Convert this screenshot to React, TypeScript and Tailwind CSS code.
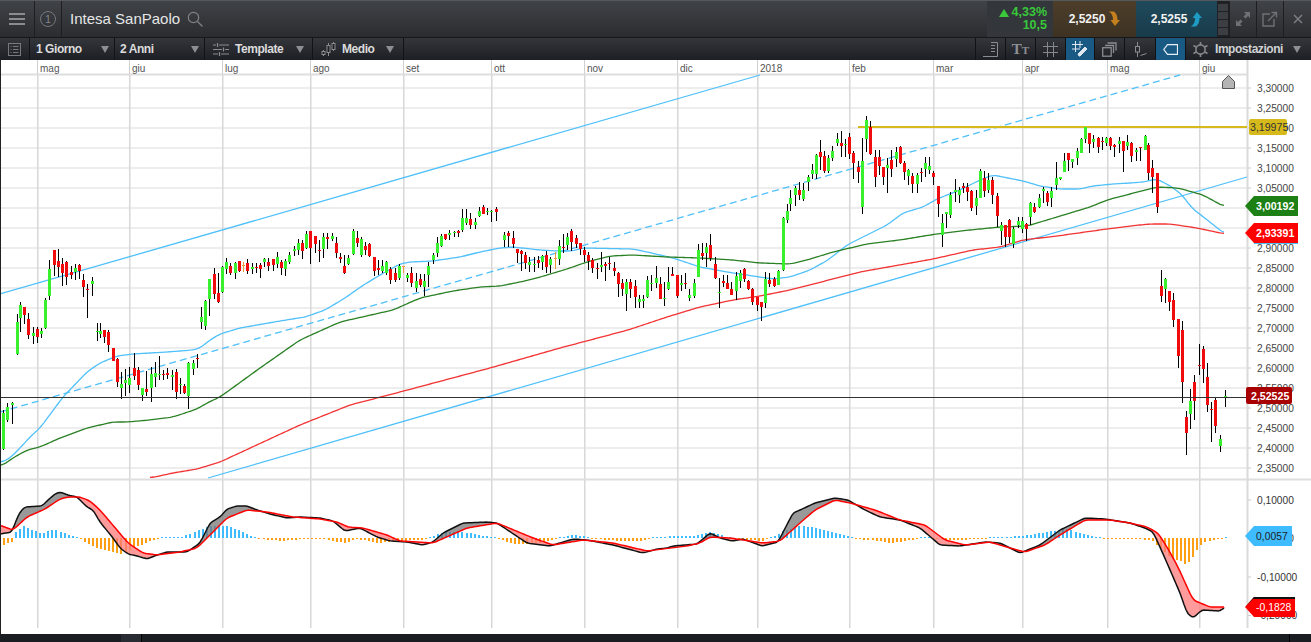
import React from "react"

type Pt = [number, number]
type Row = [number, number, number, number, number, string]

// candle rows are read off 3x crops: [x, wickTop, wickBottom, bodyTop, bodyBottom, colour]
const block = (ox: number, oy: number, rows: Row[]) =>
  rows.map(([x, a, b, c, d, k]) => ({
    x: ox + x / 3,
    top: oy + a / 3,
    bottom: oy + b / 3,
    bodyTop: oy + c / 3,
    bodyBottom: oy + d / 3,
    k,
  }))

const g = "g"
const r = "r"
const o = "o"

const candles = [
  ...block(0, 240, [
    [10,510,630,520,628,g],[22,490,545,502,540,g],[37,485,552,488,494,g],[50,222,345,245,340,g],[61,187,275,195,233,g],
    [73,200,252,202,227,r],[85,220,297,238,285,r],[100,260,312,279,288,g],[112,262,308,268,293,r],[124,265,293,273,281,g],
    [136,175,268,180,263,g],[148,60,180,88,168,g],[163,30,108,30,75,r],[175,28,110,63,80,r],[187,55,137,72,98,r],
    [199,62,135,67,113,r],[214,78,118,96,106,r],[226,72,120,83,95,g],[238,72,118,75,93,r],[250,102,170,120,140,r],
    [262,133,233,147,149,r],[277,110,167,123,131,g],[290,250,303,273,275,g],[301,250,293,273,282,g],[313,270,310,270,291,r],
    [325,270,335,275,315,r],[340,323,363,323,362,r],[352,355,440,357,426,r],[364,396,476,431,444,g],[376,388,468,420,428,g],
    [388,382,458,415,435,g],[403,340,420,384,407,r],[415,380,450,390,435,r],[427,443,482,444,465,g],[439,393,468,447,456,r],
    [454,380,486,402,443,g],[466,365,440,400,411,g],[478,348,420,401,403,g],[490,390,420,401,403,r],[502,385,418,399,404,r],
    [517,390,450,404,411,g],[529,388,476,396,456,r],[541,415,462,432,434,g],[553,432,462,438,458,r],[565,365,507,370,468,g],
    [580,360,405,368,387,g],[592,342,385,354,356,r],[604,200,268,232,246,g],[616,180,270,183,258,g],[628,118,228,118,177,g],
    [643,85,177,102,162,r],[655,100,190,160,188,r],
  ]),
  ...block(220, 200, [
    [7,197,278,200,275,g],[19,175,222,186,208,g],[31,190,225,198,220,r],[46,185,236,189,220,g],[58,183,215,183,213,r],
    [70,185,215,196,199,o],[82,177,222,189,214,r],[97,190,222,201,206,g],[109,190,220,202,205,r],[121,190,233,196,209,r],
    [133,175,200,177,186,g],[145,175,212,186,198,r],[160,177,212,178,195,r],[172,155,205,171,192,g],[184,180,225,186,204,r],
    [196,178,228,183,207,g],[208,155,193,165,186,g],[223,138,168,146,151,g],[235,118,165,129,150,g],[247,120,178,129,152,r],
    [259,92,148,102,145,g],[271,92,192,93,143,r],[286,108,160,108,132,r],[298,120,185,150,152,r],[310,100,175,110,147,g],
    [322,100,148,111,117,r],[337,100,122,107,117,g],[349,112,175,128,158,r],[361,160,190,171,177,r],[373,165,222,197,219,r],
    [385,165,195,174,192,g],[400,88,165,92,160,g],[412,92,142,114,128,r],[424,112,170,117,165,g],[436,125,165,137,150,r],
    [448,130,172,131,168,r],[463,170,228,170,213,r],[475,180,225,204,210,r],[487,180,220,197,212,g],[499,183,225,186,220,g],
    [511,200,252,207,240,r],[526,205,245,219,240,r],[538,192,240,198,233,g],[550,197,218,199,202,o],[562,218,245,225,234,g],
    [574,200,262,219,248,r],[589,220,275,243,263,g],[601,222,260,238,257,r],[613,222,288,242,261,g],[625,185,262,197,225,g],
    [640,160,192,165,180,g],[652,110,172,129,160,g],[664,102,140,108,137,g],[676,102,120,102,118,r],[688,90,120,98,105,g],
    [703,92,110,95,97,g],[715,90,110,94,99,r],[727,28,95,54,89,g],[739,28,75,53,69,g],[751,38,88,57,74,r],
    [766,55,88,66,75,g],[778,22,50,33,47,g],[790,15,43,20,42,r],[802,25,45,32,33,g],[814,30,65,33,35,g],[829,22,62,28,38,r],
  ]),
  ...block(500, 220, [
    [13,35,80,45,60,g],[25,33,80,40,50,r],[40,33,85,54,73,r],[52,87,130,87,99,r],[64,90,152,93,102,r],[76,95,148,105,130,r],
    [88,110,155,126,135,g],[103,110,155,132,134,g],[115,108,145,121,129,r],[127,105,150,109,127,g],[139,92,160,106,142,r],
    [151,112,160,117,135,g],[166,97,147,114,116,o],[178,60,135,78,118,g],[190,42,100,81,83,r],[202,40,90,52,77,g],
    [214,28,92,34,67,r],[229,45,85,54,72,r],[241,68,105,70,87,r],[253,80,125,90,105,r],[265,95,150,105,122,r],
    [277,115,158,119,142,r],[292,130,177,143,146,r],[304,95,155,135,141,g],[316,125,182,132,138,r],[328,112,150,129,132,r],
    [343,125,167,143,153,r],[355,155,232,158,192,r],[367,178,228,189,206,r],[379,178,272,187,222,g],[391,178,233,187,207,r],
    [406,180,263,198,232,r],[418,225,263,237,246,g],[430,225,263,237,243,g],[442,168,235,180,232,g],[454,165,212,189,193,g],
    [469,137,205,175,191,g],[481,170,238,192,238,r],[493,185,258,233,236,g],[505,140,210,186,208,g],[517,140,168,162,167,r],
    [532,165,235,165,228,r],[544,165,212,188,193,g],[556,160,207,188,191,r],[568,207,243,226,234,g],[583,178,233,189,228,g],
    [595,72,172,90,172,g],[607,70,120,99,108,r],[619,70,142,81,100,g],[631,42,123,75,115,r],[646,112,177,132,175,r],
    [658,175,265,216,219,g],[670,165,200,183,188,r],[682,165,208,188,207,r],[694,185,225,207,225,r],[709,155,240,167,213,g],
    [721,150,205,160,183,g],[733,145,185,147,177,r],[745,180,210,183,208,r],[757,205,255,207,245,r],[772,230,272,232,255,r],
    [784,245,302,247,262,r],[796,155,265,178,250,g],[808,158,200,179,192,r],[823,170,200,176,197,r],[835,150,195,152,193,g],
  ]),
  ...block(760, 100, [
    [68,350,513,353,510,g],[80,312,368,332,360,g],[91,270,333,294,312,g],[106,258,318,263,285,g],[118,247,300,270,285,r],
    [130,250,303,270,298,g],[143,225,273,232,248,g],[155,192,237,210,222,g],[169,163,237,165,222,g],[181,120,210,156,171,r],
    [193,152,218,167,213,r],[205,165,218,175,213,g],[217,138,182,153,173,g],[232,98,138,117,130,g],[244,94,170,129,137,r],
    [256,118,170,132,135,g],[268,98,178,111,161,r],[280,153,237,159,188,r],[295,183,248,200,215,r],[307,115,342,183,320,g],
    [319,48,155,60,117,g],[331,63,165,80,160,r],[346,150,260,170,230,r],[358,150,225,171,197,r],[370,200,255,202,233,r],
    [382,175,278,195,203,g],[394,150,230,180,208,r],[409,140,202,155,175,g],[421,138,192,141,190,r],[433,183,240,190,218,r],
    [445,208,255,209,228,g],[457,218,278,228,251,r],[472,220,278,226,254,g],[484,205,247,215,218,r],[496,170,232,190,209,g],
    [508,170,223,197,209,g],[520,212,254,220,233,r],[535,258,352,258,312,r],[547,342,442,370,405,g],[559,335,385,335,340,g],
    [571,275,355,284,344,g],[586,237,305,270,275,g],[598,262,310,270,285,g],[610,250,280,258,263,r],[622,250,302,260,275,r],
    [634,270,332,273,323,r],[649,270,345,293,318,g],[661,208,295,212,292,g],[673,213,290,235,275,r],[685,220,280,240,270,g],
    [697,230,312,240,285,r],[712,278,380,288,348,r],
  ]),
  ...block(990, 120, [
    [34,305,375,316,335,g],[46,315,380,316,352,r],[58,298,368,299,350,r],[70,320,385,328,372,g],[85,290,325,303,315,g],
    [97,290,340,303,327,g],[109,310,362,313,327,r],[121,245,315,248,290,g],[133,250,280,262,278,r],[148,222,265,235,262,g],
    [160,200,250,208,215,g],[172,212,258,220,248,r],[184,202,260,213,234,g],[199,125,210,174,195,g],[211,170,180,171,177,g],
    [223,98,155,123,155,g],[235,98,152,99,120,r],[247,118,145,118,128,g],[262,85,135,93,113,g],[274,55,100,57,98,g],
    [286,20,70,22,57,g],[298,40,98,40,74,r],[310,45,85,57,65,g],[325,52,100,54,82,r],[337,50,90,62,65,r],[349,50,78,54,68,g],
    [361,52,90,55,80,r],[373,72,110,75,80,r],[388,52,100,63,72,g],[400,62,155,63,92,r],[412,45,90,65,76,g],
  ]),
  ...block(1130, 80, [
    [3,185,245,188,227,r],[18,205,243,209,215,g],[31,200,243,201,204,r],[44,165,210,167,210,g],[55,190,300,195,278,r],
    [67,240,338,263,291,r],[82,280,400,280,383,r],
  ]),
  ...block(1130, 260, [
    [94,30,125,78,107,r],[106,55,128,57,87,g],[118,93,152,93,125,r],[130,98,200,120,180,r],[145,177,325,177,287,r],
    [157,183,430,210,365,r],[169,452,584,471,518,r],[181,387,508,423,462,g],[193,345,480,366,422,r],[208,252,345,315,317,r],
    [220,258,370,267,326,r],[232,310,455,351,434,r],[244,425,545,447,449,r],[256,412,520,420,497,r],[271,525,575,537,557,g],
    [284,390,440,408,411,g],
  ]),
]

const lerp = (pts: Pt[], x: number) => {
  for (let i = 1; i < pts.length; i++) {
    if (x <= pts[i][0]) {
      const [x0, y0] = pts[i - 1]
      const [x1, y1] = pts[i]
      return y0 + ((y1 - y0) * (x - x0)) / (x1 - x0)
    }
  }
  return pts[pts.length - 1][1]
}

// the anchors are sparse, so average over a window to round the corners off
const smooth = (pts: Pt[], w: number): Pt[] => {
  const from = pts[0][0]
  const to = pts[pts.length - 1][0]
  const out: Pt[] = []
  for (let x = from; x <= to; x += 2) {
    let sum = 0
    let n = 0
    for (let i = Math.max(from, x - w); i <= Math.min(to, x + w); i += 1) {
      sum += lerp(pts, i)
      n++
    }
    out.push([x, +(sum / n).toFixed(2)])
  }
  return out
}

const blueMa = smooth([[0,463],[10,458],[20,448],[30,437],[40,428],[63,397],[87,372],[100,363],[117,356],[133,354],[167,352],[193,350],[200,348],[210,340],[220,334],[240,328],[280,321],[305,317],[325,310],[345,298],[362,286],[380,275],[400,264],[410,262],[433,261],[460,257],[480,252],[500,248],[513,247],[540,250],[557,251],[572,251],[583,248],[633,249],[647,252],[673,258],[700,267],[727,272],[753,276],[773,279],[790,277],[810,270],[828,260],[847,245],[867,235],[887,225],[903,213],[923,207],[937,199],[960,190],[980,180],[993,175],[1003,177],[1023,181],[1040,186],[1060,189],[1080,189],[1093,186],[1113,184],[1130,183],[1143,182],[1157,179],[1172,187],[1182,195],[1192,208],[1225,234]], 4)
const greenMa = smooth([[0,467],[13,458],[27,450],[40,447],[60,438],[87,428],[113,422],[127,422],[150,420],[173,417],[197,409],[207,403],[220,397],[260,368],[300,340],[340,322],[393,310],[420,298],[453,291],[480,287],[500,286],[520,282],[537,278],[567,269],[587,262],[610,256],[633,255],[667,257],[700,258],[733,260],[760,263],[790,264],[807,260],[833,252],[867,244],[900,240],[930,235],[960,231],[1000,227],[1027,226],[1057,217],[1090,207],[1107,200],[1130,194],[1157,187],[1178,188],[1203,195],[1225,207]], 5)
const redMa = smooth([[150,478],[173,473],[197,469],[220,462],[300,425],[350,405],[400,392],[490,368],[560,348],[628,330],[667,317],[700,307],[733,300],[760,296],[790,290],[860,272],[933,259],[973,250],[1000,247],[1023,240],[1057,236],[1107,229],[1130,226],[1150,224],[1170,224],[1197,228],[1225,234]], 5)

const macd = smooth([[0,534],[12,532],[15,523],[20,512],[25,507],[42,506],[48,500],[55,494],[60,492],[68,495],[77,497],[87,507],[93,510],[100,522],[113,538],[120,548],[128,554],[137,556],[147,559],[157,555],[167,552],[187,552],[200,543],[210,523],[220,517],[227,509],[237,506],[247,506],[257,510],[270,514],[287,518],[300,517],[320,518],[333,521],[345,531],[360,528],[377,537],[390,541],[407,542],[423,545],[433,542],[443,533],[463,523],[487,522],[497,523],[527,543],[550,546],[573,539],[587,540],[613,545],[643,553],[657,549],[667,548],[673,546],[697,544],[710,533],[720,538],[732,541],[743,539],[762,546],[778,542],[793,513],[800,510],[815,503],[835,498],[848,500],[865,510],[880,517],[900,520],[920,528],[940,545],[960,546],[985,542],[1000,543],[1020,553],[1040,545],[1060,530],[1085,518],[1105,519],[1130,523],[1145,528],[1153,532],[1160,547],[1167,563],[1180,593],[1187,613],[1193,618],[1202,610],[1220,611],[1225,607]], 2)
const signal = smooth([[0,525],[7,528],[13,530],[27,517],[45,509],[60,499],[68,497],[80,497],[90,501],[100,510],[117,530],[128,543],[143,553],[157,555],[180,552],[197,548],[213,532],[227,518],[247,510],[267,512],[293,517],[320,519],[337,522],[348,527],[363,528],[387,535],[400,541],[433,543],[467,528],[497,523],[533,538],[553,545],[583,540],[613,543],[647,551],[687,546],[700,543],[710,537],[730,538],[763,543],[780,541],[800,523],[815,510],[835,500],[850,503],[875,510],[900,520],[925,525],[945,540],[965,545],[990,542],[1010,548],[1025,552],[1045,545],[1060,535],[1085,520],[1110,520],[1130,523],[1147,527],[1158,533],[1167,547],[1178,567],[1193,600],[1210,607],[1225,607]], 3)

const histo: Pt[] = [[3,-7],[12,-3],[15,6],[23,12],[32,8],[41,4],[53,9],[65,4],[75,1],[79,-1],[96,-10],[120,-16],[133,-10],[150,-3],[155,-1],[160,1],[172,1.5],[180,1],[187,3],[200,9],[210,12],[226,12],[240,7],[252,1],[260,-1],[282,-3],[300,-1],[323,-1],[343,-5],[357,-1],[377,-5],[393,-3],[423,-2],[437,4],[443,6],[463,6],[477,3],[493,1],[498,-1],[513,-6],[525,-6],[537,-5],[553,-1],[560,1],[573,3],[587,1],[593,-1],[620,-3],[643,-3],[650,1],[660,1],[673,2],[693,2],[707,6],[720,4],[723,1],[740,-1],[762,-3],[767,-1],[773,1],[782,7],[800,12],[815,10],[835,5],[850,1],[855,-1],[870,-2],[890,-5],[905,-3],[915,-1],[925,1],[935,-1],[950,-2],[962,-2],[975,-1],[1000,1],[1020,2],[1040,5],[1065,9],[1080,5],[1095,1],[1105,-1],[1131,-1],[1140,-1],[1152,-3],[1157,-8],[1162,-12],[1170,-20],[1182,-24],[1186,-27],[1190,-22],[1198,-10],[1203,-4],[1212,-2],[1220,-1],[1224,1]]

const toPoints = (pts: Pt[]) => pts.map((p) => p.join(",")).join(" ")

// splits the area between the two macd lines into grey and pink runs
const macdFills = () => {
  const runs: { up: boolean; top: Pt[]; bottom: Pt[] }[] = []
  for (let x = 0; x <= 1225; x++) {
    const a = lerp(macd, x)
    const b = lerp(signal, x)
    const up = a < b
    let last = runs[runs.length - 1]
    if (!last || last.up !== up) {
      last = { up, top: [], bottom: [] }
      runs.push(last)
    }
    last.top.push([x, a])
    last.bottom.push([x, b])
  }
  return runs.map((run) => ({
    up: run.up,
    d: toPoints([...run.top, ...run.bottom.reverse()]),
  }))
}

const histoBars = () => {
  const bars = []
  for (let x = 2.7; x < 1226; x += 4.06) {
    bars.push({ x, h: lerp(histo, x) })
  }
  return bars
}

const months: [string, number][] = [["mag",37],["giu",129],["lug",222],["ago",310],["set",403],["ott",491],["nov",584],["dic",677],["2018",757],["feb",849],["mar",933],["apr",1022],["mag",1107],["giu",1199]]
const priceLabels = ["3,30000","3,25000","3,20000","3,15000","3,10000","3,05000","3,00000","2,95000","2,90000","2,85000","2,80000","2,75000","2,70000","2,65000","2,60000","2,55000","2,50000","2,45000","2,40000","2,35000"]

function Chart() {
  return (
    <svg viewBox="0 60 1311 574" className="block h-[574px] w-[1311px] bg-white">
      {/* grid */}
      {priceLabels.map((_, i) => (
        <rect key={i} x="0" y={87.5 + i * 20} width="1247" height="1" fill="#dcdcdc" />
      ))}
      <rect x="0" y="73.5" width="1247" height="2" fill="#dedede" />
      <rect x="0" y="478.5" width="1311" height="2" fill="#dedede" />
      {months.map(([m, x], i) => (
        <g key={i}>
          <rect x={x} y="60" width="1" height="14" fill="#d0d0d0" />
          <rect x={x} y="75" width="1.5" height="404" fill="#d8d8d8" />
          <rect x={x} y="480" width="1.5" height="148" fill="#d8d8d8" />
          <text x={x + 3} y="72" fontSize="10" fill="#555">{m}</text>
        </g>
      ))}
      <rect x="1246.5" y="60" width="2" height="568" fill="#dadada" />

      {/* axis */}
      {priceLabels.map((p, i) => (
        <g key={p}>
          <rect x="1248" y={87.5 + i * 20} width="3" height="1" fill="#ccc" />
          <text x="1257" y={91.5 + i * 20} fontSize="10.2" fill="#444">{p}</text>
        </g>
      ))}
      <text x="1257" y="503.5" fontSize="10.2" fill="#333">0,10000</text>
      <text x="1257" y="541.5" fontSize="10.2" fill="#333">0,00000</text>
      <text x="1257" y="580.5" fontSize="10.2" fill="#333">-0,10000</text>
      <text x="1257" y="618.5" fontSize="10.2" fill="#333">-0,20000</text>
      {[499.5, 538, 576.5, 615].map((y) => (
        <rect key={y} x="1248" y={y} width="3" height="1" fill="#ccc" />
      ))}

      {/* trend lines */}
      <line x1="0" y1="294" x2="760" y2="75" stroke="#4fc0fa" strokeWidth="1.3" />
      <line x1="0" y1="412" x2="1180" y2="75" stroke="#4fc0fa" strokeWidth="1.3" strokeDasharray="7 4" />
      <line x1="208" y1="478" x2="1247" y2="177" stroke="#4fc0fa" strokeWidth="1.3" />
      <rect x="858" y="126" width="389" height="2" fill="#d6b91a" />

      <polyline points={toPoints(blueMa)} fill="none" stroke="#4fc0fa" strokeWidth="1.3" />
      <polyline points={toPoints(greenMa)} fill="none" stroke="#2a8025" strokeWidth="1.3" />
      <polyline points={toPoints(redMa)} fill="none" stroke="#f23333" strokeWidth="1.3" />

      {/* candles */}
      {candles.map((c, i) => {
        const x = Math.round(c.x)
        const fill = c.k === "g" ? "#38f02e" : c.k === "r" ? "#f00c0c" : "#e89a3c"
        const bodyH = Math.max(1, Math.round(c.bodyBottom - c.bodyTop))
        return (
          <g key={i} shapeRendering="crispEdges">
            <rect x={x} y={c.top} width="1" height={c.bottom - c.top} fill={c.k === "o" ? fill : "#000"} />
            <rect x={x - 1} y={Math.round(c.bodyTop)} width="3" height={bodyH} fill={fill} />
          </g>
        )
      })}
      <rect x="0" y="397" width="1247" height="1" fill="#333" />

      {/* home marker */}
      <path d="M1222.5 88.5 V81.5 L1228.5 75.5 L1234.5 81.5 V88.5 Z" fill="#b4b4b4" stroke="#555" strokeWidth="1" />

      {/* macd */}
      {histoBars().map((b, i) => (
        <rect
          key={i}
          x={Math.round(b.x)}
          y={b.h > 0 ? 538 - Math.max(1, b.h) : 538}
          width="2"
          height={Math.max(1, Math.abs(b.h))}
          fill={b.h > 0 ? "#3fbcff" : "#ff9f14"}
          shapeRendering="crispEdges"
        />
      ))}
      {macdFills().map((f, i) => (
        <polygon key={i} points={f.d} fill={f.up ? "#777" : "#ff7a7a"} fillOpacity="0.75" />
      ))}
      <polyline points={toPoints(macd)} fill="none" stroke="#111" strokeWidth="1.5" />
      <polyline points={toPoints(signal)} fill="none" stroke="#f00" strokeWidth="1.5" />

      {/* value tags */}
      <rect x="1249" y="119" width="38" height="16" rx="2" fill="#d6b91a" />
      <text x="1250" y="131" fontSize="10.6" fill="#333">3,19975</text>

      <polygon points="1245,206 1254,196 1298,196 1298,216 1254,216" fill="#1d8015" />
      <text x="1256" y="210" fontSize="10.6" fontWeight="700" fill="#fff">3,00192</text>

      <rect x="1254" y="243" width="44" height="1" fill="#4fc0fa" />
      <polygon points="1245,233 1254,223 1298,223 1298,243 1254,243" fill="#f00" />
      <text x="1256" y="237" fontSize="10.6" fontWeight="700" fill="#fff">2,93391</text>

      <rect x="1246" y="387" width="46" height="17" rx="2" fill="#a80000" />
      <text x="1251" y="399.5" fontSize="10.6" fontWeight="700" fill="#fff">2,52525</text>

      <polygon points="1245,536 1254,526 1292,526 1292,546 1254,546" fill="#3fbcff" />
      <text x="1256" y="540" fontSize="10.4" fill="#222">0,0057</text>

      <polygon points="1245,607 1254,597 1295,597 1295,617 1254,617" fill="#f00" />
      <polygon points="1245,607 1254,597 1295,597 1295,599 1253,599" fill="#111" />
      <text x="1256" y="611" fontSize="10.4" fill="#fff">-0,1828</text>
    </svg>
  )
}

function Arrow({ up, color }: { up?: boolean; color: string }) {
  return (
    <svg width="12" height="16" viewBox="0 0 12 16" className={up ? "" : "-scale-y-100"}>
      <path d="M7 1 L12 7 H9.5 C9.5 10 9 13 6 15.5 L0.5 15.5 C4.5 13.5 5 10 5 7 H2.5 Z" fill={color} />
    </svg>
  )
}

function Caret() {
  return <span className="block h-0 w-0 border-x-[4px] border-t-[7px] border-x-transparent border-t-[#8b8e92]" />
}

function Cell({ w, active, children }: { w: string; active?: boolean; children: React.ReactNode }) {
  return (
    <div className={`flex h-full items-center justify-center border-l border-[#101215] ${w} ${active ? "bg-[#195a85]" : ""}`}>
      {children}
    </div>
  )
}

export default function App() {
  return (
    <div className="h-[642px] w-[1311px] overflow-hidden bg-[#1a1d22] [font-family:Liberation_Sans,Arial,sans-serif]">
      {/* title row */}
      <div className="flex h-[37px] items-stretch border-t border-[#55585c] bg-gradient-to-b from-[#404347] to-[#2a2c30]">
        <div className="flex w-[35px] flex-col items-center justify-center gap-[3px] border-r border-[#1c1e21]">
          <span className="h-[2px] w-[16px] bg-[#8a8d90]" />
          <span className="h-[2px] w-[16px] bg-[#8a8d90]" />
          <span className="h-[2px] w-[16px] bg-[#8a8d90]" />
        </div>
        <div className="flex w-[27px] items-center justify-center border-r border-[#1c1e21]">
          <span className="flex h-[16px] w-[16px] items-center justify-center rounded-full border border-[#75787c] text-[10px] text-[#85888c]">1</span>
        </div>
        <div className="ml-[8px] flex items-center text-[15px] text-[#e6e6e6]">Intesa SanPaolo</div>
        <div className="ml-[7px] flex items-center">
          <svg width="16" height="16" viewBox="0 0 16 16" fill="none" stroke="#7f8286" strokeWidth="1.2">
            <circle cx="6.5" cy="6.5" r="5.2" />
            <path d="M10.5 10.5 L15.5 15.5" />
          </svg>
        </div>
        <div className="ml-auto flex">
          <div className="flex w-[66px] flex-col items-end justify-center bg-[#33363a] pr-[6px] text-[12.5px] font-bold leading-[13px] text-[#39c93a]">
            <span className="flex items-center gap-[3px]">
              <span className="block h-0 w-0 border-x-[5px] border-b-[8px] border-x-transparent border-b-[#39c93a]" />
              4,33%
            </span>
            <span>10,5</span>
          </div>
          <div className="flex w-[83px] items-center justify-center gap-[3px] bg-gradient-to-b from-[#4d3e2a] to-[#3d3222] text-[12px] font-bold text-[#f2f2f2]">
            2,5250
            <Arrow color="#c47f1e" />
          </div>
          <div className="flex w-[81px] items-center justify-center gap-[3px] bg-gradient-to-b from-[#1f4a5c] to-[#183b4a] text-[12px] font-bold text-[#f2f2f2]">
            2,5255
            <Arrow up color="#1e9cc4" />
          </div>
          <div className="flex w-[12px] flex-col justify-center gap-[1px] bg-[#1f2125] px-[1px]">
            <span className="h-[7px] bg-[#3b3e42]" />
            <span className="h-[7px] bg-[#3b3e42]" />
            <span className="h-[7px] bg-[#3b3e42]" />
            <span className="h-[7px] bg-[#3b3e42]" />
          </div>
          <div className="flex w-[27px] items-center justify-center border-l border-[#1c1e21]">
            <svg width="14" height="14" viewBox="0 0 14 14" fill="#6d7074">
              <path d="M8 0 H14 V6 L12 4 L9.5 6.5 L7.5 4.5 L10 2 Z" />
              <path d="M6 14 H0 V8 L2 10 L4.5 7.5 L6.5 9.5 L4 12 Z" />
            </svg>
          </div>
          <div className="flex w-[27px] items-center justify-center border-l border-[#1c1e21]">
            <svg width="16" height="16" viewBox="0 0 16 16" fill="none" stroke="#6d7074" strokeWidth="1.4">
              <path d="M8 3 H1 V15 H12 V8" />
              <path d="M6 10 L14 2 M9.5 1.5 H14.5 V6.5" />
            </svg>
          </div>
          <div className="flex w-[28px] items-center justify-center border-l border-[#1c1e21]">
            <svg width="12" height="12" viewBox="0 0 12 12" stroke="#7b7e82" strokeWidth="1.5">
              <path d="M2 2 L10 10 M10 2 L2 10" />
            </svg>
          </div>
        </div>
      </div>

      {/* tool row */}
      <div className="flex h-[23px] items-center border-t border-[#15171a] bg-gradient-to-b from-[#33363b] to-[#1d1f24] text-[12px] font-bold tracking-[-0.45px] text-[#dcdcdc]">
        <div className="flex h-full w-[30px] items-center justify-center border-r border-[#111316]">
          <svg width="13" height="13" viewBox="0 0 13 13" fill="none" stroke="#75787c">
            <rect x="0.5" y="0.5" width="12" height="12" />
            <path d="M2.5 3.5 H3.5 M5 3.5 H10.5 M2.5 6.5 H3.5 M5 6.5 H10.5 M2.5 9.5 H3.5 M5 9.5 H10.5" />
          </svg>
        </div>
        <div className="flex h-full w-[85px] items-center justify-between border-r border-[#111316] pl-[6px] pr-[5px]">
          1 Giorno <Caret />
        </div>
        <div className="flex h-full w-[90px] items-center justify-between border-r border-[#111316] pl-[5px] pr-[5px]">
          2 Anni <Caret />
        </div>
        <div className="flex h-full w-[108px] items-center gap-[6px] border-r border-[#111316] pl-[8px]">
          <svg width="16" height="13" viewBox="0 0 16 13" fill="none" stroke="#8a8d90" strokeWidth="1.2">
            <path d="M0 2 H3 M6 2 H16 M4.5 0 V4 M0 6.5 H9 M12 6.5 H16 M10.5 4.5 V8.5 M0 11 H5 M8 11 H16 M6.5 9 V13" />
          </svg>
          Template
          <span className="ml-[7px]"><Caret /></span>
        </div>
        <div className="flex h-full w-[91px] items-center gap-[6px] border-r border-[#111316] pl-[8px]">
          <svg width="15" height="14" viewBox="0 0 15 14" fill="none" stroke="#8a8d90">
            <path d="M2.5 8 V14 M7.5 1 V14 M12.5 0 V9" />
            <rect x="1" y="9.5" width="3" height="3" fill="#1f2125" />
            <rect x="6" y="3.5" width="3" height="7" fill="#1f2125" />
            <rect x="11" y="1.5" width="3" height="6" fill="#1f2125" />
          </svg>
          Medio
          <span className="ml-[6px]"><Caret /></span>
        </div>

        <div className="ml-auto flex h-full">
          <Cell w="w-[30px]">
            <svg width="15" height="15" viewBox="0 0 15 15" fill="none" stroke="#8a8d90">
              <path d="M8 0.5 H14.5 V14.5 H0 M8 3.5 H12 M8 6.5 H12 M8 9.5 H12" />
            </svg>
          </Cell>
          <Cell w="w-[30px]">
            <span className="[font-family:Liberation_Serif,serif] text-[15px] font-bold tracking-normal text-[#8d9094]">
              T<span className="text-[11px]">T</span>
            </span>
          </Cell>
          <Cell w="w-[30px]">
            <svg width="15" height="15" viewBox="0 0 15 15" stroke="#85888c">
              <path d="M4.5 0 V15 M10.5 0 V15 M0 4.5 H15 M0 10.5 H15" />
            </svg>
          </Cell>
          <Cell w="w-[29px]" active>
            <svg width="16" height="16" viewBox="0 0 16 16" fill="none" stroke="#dfe8ee">
              <path d="M3.5 0 V11 M8 0 V7 M0 3.5 H11 M0 8 H8" />
              <path d="M7 15 L6 13 L13 6 L15 8 L8 15 Z" fill="#dfe8ee" />
            </svg>
          </Cell>
          <Cell w="w-[30px]">
            <svg width="15" height="15" viewBox="0 0 15 15" fill="none" stroke="#8a8d90" strokeWidth="1.3">
              <rect x="0.7" y="5.7" width="8.5" height="8.5" />
              <path d="M3 3.5 H11.5 V11 M5.5 1 H14 V8.5" />
            </svg>
          </Cell>
          <Cell w="w-[31px]">
            <svg width="14" height="15" viewBox="0 0 14 15" fill="none" stroke="#8a8d90">
              <path d="M4.5 0 V4 M4.5 10 V15 M7.5 13.5 L13.5 11.5" />
              <rect x="2.5" y="4.5" width="4" height="5.5" />
            </svg>
          </Cell>
          <Cell w="w-[30px]" active>
            <svg width="15" height="11" viewBox="0 0 15 11" fill="none" stroke="#e6eef3" strokeWidth="1.2">
              <path d="M14.5 0.6 H4.5 L0.8 5.5 L4.5 10.4 H14.5 Z" />
            </svg>
          </Cell>
          <div className="flex h-full w-[126px] items-center border-l border-[#101215] pl-[7px]">
            <svg width="15" height="15" viewBox="0 0 15 15" fill="none" stroke="#85888c" strokeWidth="1.6">
              <circle cx="7.5" cy="7.5" r="4.6" />
              <path d="M7.5 0 V3 M7.5 12 V15 M0.5 3.5 L3.2 5 M11.8 10 L14.5 11.5 M0.5 11.5 L3.2 10 M11.8 5 L14.5 3.5" />
            </svg>
            <span className="ml-[7px] text-[#d0d2d4]">Impostazioni</span>
            <span className="ml-[10px]"><Caret /></span>
          </div>
        </div>
      </div>

      <div className="relative">
        <Chart />
        <div className="absolute left-0 top-0 h-full w-px bg-[#222]" />
      </div>

      {/* bottom scroll strip */}
      <div className="relative h-[8px] bg-[#1a1d22]">
        <div className="absolute left-[121px] top-0 h-full w-[20px] bg-[#282c32]" />
        <div className="absolute left-[141px] top-0 h-full w-px bg-black" />
        <div className="absolute left-[1289px] top-0 h-full w-px bg-black" />
      </div>
    </div>
  )
}
